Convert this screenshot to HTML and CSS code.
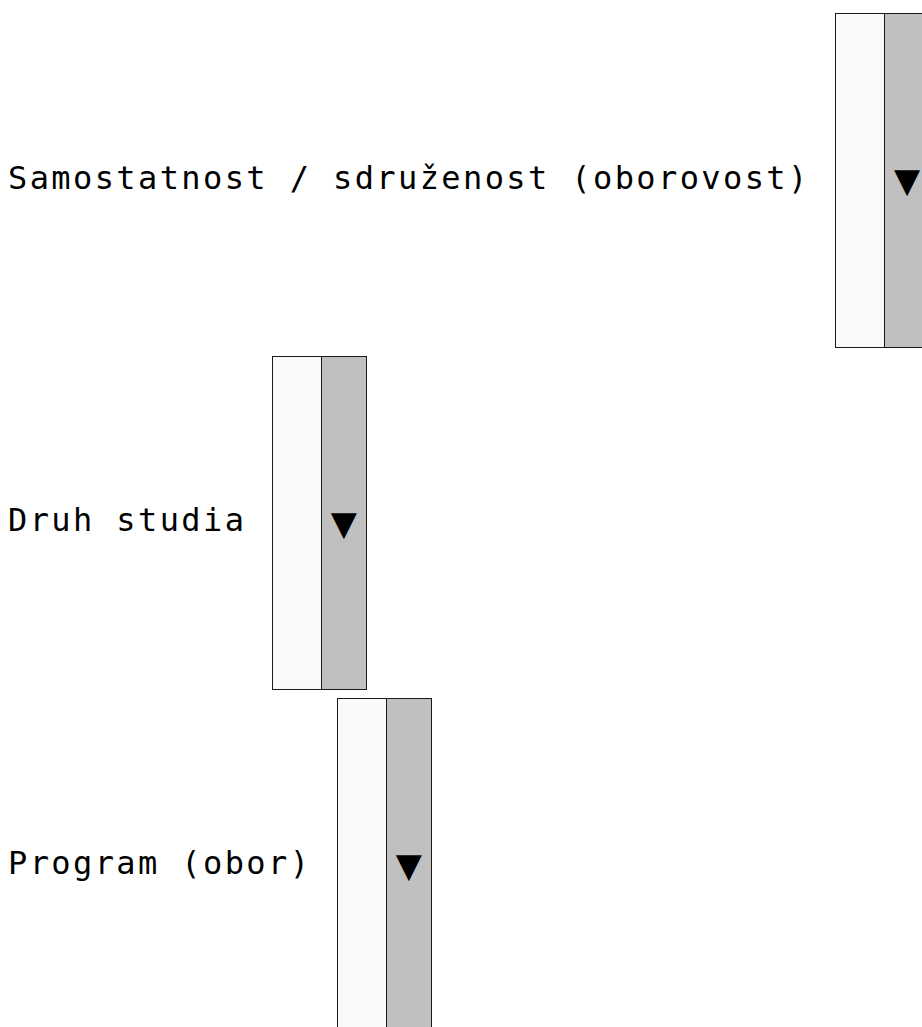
FILE: index.html
```html
<!DOCTYPE html>
<html lang="cs">
<head>
  <meta charset="UTF-8">
  <title>Filtr studia</title>
  <link rel="stylesheet" href="styles.css">
</head>
<body>

<!-- Filtry -->
<div class="filters">
  <div class="row">
    <label for="samostatnost">Samostatnost / sdruženost (oborovost)</label>
    <div class="picker" id="samostatnost">
      <span class="picker-value"></span>
      <span class="picker-arrow">&#9660;</span>
    </div>
  </div>

  <div class="row">
    <label for="druh">Druh studia</label>
    <div class="picker" id="druh">
      <span class="picker-value"></span>
      <span class="picker-arrow">&#9660;</span>
    </div>
  </div>

  <div class="row">
    <label for="program">Program (obor)</label>
    <div class="picker" id="program">
      <span class="picker-value"></span>
      <span class="picker-arrow">&#9660;</span>
    </div>
  </div>
</div>

</body>
</html>
```

FILE: styles.css
```css
html {
  overflow: hidden;
}
body {
  font-family: "DejaVu Sans Mono", monospace;
  font-size: 32px;
  letter-spacing: 2.4px;
  color: #000;
  background: #fff;
  margin: 8px 0 8px 8px;
}
.filters {
  padding-top: 5px;
  display: flex;
  flex-direction: column;
  gap: 8px;
}
.row {
  display: flex;
  align-items: center;
  gap: 25.5px;
  white-space: nowrap;
  width: max-content;
}
.row label {
  margin-bottom: 5px;
}
.picker {
  display: flex;
  flex: none;
  height: 332.5px;
  border: 1px solid #1a1a1a;
}
.picker-value {
  flex: none;
  width: 48px;
  background: #fafafa;
  border-right: 1px solid #1a1a1a;
}
.picker-arrow {
  flex: none;
  width: 44px;
  background: #c0c0c0;
  display: flex;
  align-items: center;
  justify-content: center;
  font-family: "DejaVu Sans", sans-serif;
  font-size: 34px;
  letter-spacing: 0;
}
```
